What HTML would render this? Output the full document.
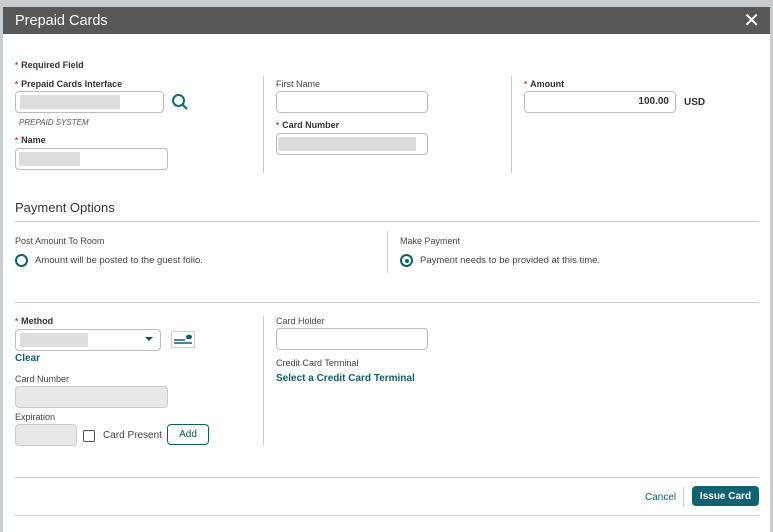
<!DOCTYPE html>
<html><head><style>
*{box-sizing:border-box;margin:0;padding:0}
body{width:773px;height:532px;background:#c9cdd0;font-family:"Liberation Sans",sans-serif;position:relative;overflow:hidden;color:#333}
.dlg{position:absolute;left:3px;top:7px;width:767px;height:525px;background:#fff}
.title{position:absolute;left:0;top:0;width:767px;height:27px;background:#575757;color:#fff;font-size:14.5px;line-height:29px;padding-left:12px}
.x{position:absolute;right:10px;top:3px;color:#fff;font-size:20px;line-height:22px}
.a{position:absolute}
.lbl{font-size:9px;color:#444}
.b{font-weight:bold;color:#333}
.req{color:#c33;font-size:8px;margin-right:3px}
.in{position:absolute;border:1px solid #bbb;border-radius:4px;height:22px;background:#fff}
.gray{position:absolute;background:#ddd}
.vl{position:absolute;width:1px;background:#ccc}
.hl{position:absolute;height:1px;background:#ccc}
.teal{color:#0f5f6b;font-weight:bold;font-size:10px}
.btn{display:flex;align-items:center;justify-content:center}
</style></head><body>
<div class="dlg">
<div class="title">Prepaid Cards<span class="x">✕</span></div>
<div class="a lbl b" style="left:12px;top:53px"><span class="req">*</span>Required Field</div>
<div class="a lbl b" style="left:12px;top:72px"><span class="req">*</span>Prepaid Cards Interface</div>
<div class="in" style="left:12px;top:84px;width:149px"></div>
<div class="gray" style="left:17px;top:88px;width:100px;height:14px"></div>
<svg class="a" style="left:168px;top:86px" width="18" height="18"><circle cx="7.5" cy="7.5" r="5.5" fill="none" stroke="#0f6b73" stroke-width="2"/><line x1="11.5" y1="11.5" x2="16" y2="16" stroke="#0f6b73" stroke-width="2.2"/></svg>
<div class="a" style="left:16px;top:111px;font-size:8px;font-style:italic;color:#555">PREPAID SYSTEM</div>
<div class="a lbl b" style="left:12px;top:128px"><span class="req">*</span>Name</div>
<div class="in" style="left:12px;top:141px;width:153px"></div>
<div class="gray" style="left:16px;top:145px;width:61px;height:14px"></div>
<div class="vl" style="left:260px;top:69px;height:97px"></div>
<div class="a lbl" style="left:273px;top:72px">First Name</div>
<div class="in" style="left:273px;top:84px;width:152px"></div>
<div class="a lbl b" style="left:273px;top:113px"><span class="req">*</span>Card Number</div>
<div class="in" style="left:273px;top:126px;width:152px"></div>
<div class="gray" style="left:275px;top:130px;width:138px;height:14px"></div>
<div class="vl" style="left:508px;top:69px;height:97px"></div>
<div class="a lbl b" style="left:521px;top:72px"><span class="req">*</span>Amount</div>
<div class="in" style="left:521px;top:84px;width:152px;font-size:10px;font-weight:bold;text-align:right;padding-right:6px;line-height:20px">100.00</div>
<div class="a b" style="left:681px;top:90px;font-size:10px">USD</div>
<div class="a" style="left:12px;top:193px;font-size:13px;color:#333">Payment Options</div>
<div class="hl" style="left:12px;top:214px;width:744px"></div>
<div class="a lbl" style="left:12px;top:229px">Post Amount To Room</div>
<div class="a" style="left:12px;top:247px;width:13px;height:13px;border:2px solid #0f5f6b;border-radius:50%"></div>
<div class="a" style="left:32px;top:248px;font-size:9.5px;color:#444">Amount will be posted to the guest folio.</div>
<div class="vl" style="left:384px;top:224px;height:42px"></div>
<div class="a lbl" style="left:397px;top:229px">Make Payment</div>
<div class="a" style="left:397px;top:247px;width:13px;height:13px;border:2px solid #0f5f6b;border-radius:50%"><div style="position:absolute;left:2.5px;top:2.5px;width:4px;height:4px;background:#0f5f6b;border-radius:50%"></div></div>
<div class="a" style="left:417px;top:248px;font-size:9.5px;color:#444">Payment needs to be provided at this time.</div>
<div class="hl" style="left:12px;top:295px;width:744px"></div>
<div class="a lbl b" style="left:12px;top:309px"><span class="req">*</span>Method</div>
<div class="in" style="left:12px;top:322px;width:146px"></div>
<div class="gray" style="left:17px;top:326px;width:68px;height:14px"></div>
<div class="a" style="left:142px;top:330px;width:0;height:0;border-left:4px solid transparent;border-right:4px solid transparent;border-top:4px solid #0f4f5b"></div>
<svg class="a" style="left:168px;top:324px" width="24" height="17"><rect x="0.5" y="0.5" width="23" height="16" fill="#fff" stroke="#ccc"/><line x1="3" y1="9" x2="14" y2="9" stroke="#0f5f6b" stroke-width="1.5"/><line x1="3" y1="12" x2="21" y2="12" stroke="#0f5f6b" stroke-width="1.5"/><ellipse cx="18" cy="6" rx="3" ry="2.3" fill="#0f5f6b"/></svg>
<div class="a teal" style="left:12px;top:346px">Clear</div>
<div class="a lbl" style="left:12px;top:367px">Card Number</div>
<div class="in" style="left:12px;top:379px;width:153px;background:#e8e8e8;border-color:#ccc"></div>
<div class="a lbl" style="left:12px;top:405px">Expiration</div>
<div class="in" style="left:12px;top:417px;width:62px;background:#e8e8e8;border-color:#ccc"></div>
<div class="a" style="left:80px;top:423px;width:12px;height:12px;border:1px solid #555;border-radius:2px"></div>
<div class="a" style="left:100px;top:423px;font-size:10px;color:#444">Card Present</div>
<div class="a btn" style="left:164px;top:417px;width:42px;height:21px;border:1px solid #0f5f6b;border-radius:4px;font-size:10px;color:#0f4f5b">Add</div>
<div class="vl" style="left:260px;top:309px;height:130px"></div>
<div class="a lbl" style="left:273px;top:309px">Card Holder</div>
<div class="in" style="left:273px;top:321px;width:152px"></div>
<div class="a lbl" style="left:273px;top:351px">Credit Card Terminal</div>
<div class="a teal" style="left:273px;top:366px">Select a Credit Card Terminal</div>
<div class="hl" style="left:12px;top:470px;width:744px"></div>
<div class="a" style="left:642px;top:485px;font-size:10px;color:#0f5f6b">Cancel</div>
<div class="vl" style="left:680px;top:480px;height:20px"></div>
<div class="a btn" style="left:689px;top:479px;width:67px;height:20px;background:#0f6270;border-radius:4px;color:#fff;font-size:10px;font-weight:bold">Issue Card</div>
<div class="hl" style="left:12px;top:508px;width:744px"></div>
</div>
</body></html>
